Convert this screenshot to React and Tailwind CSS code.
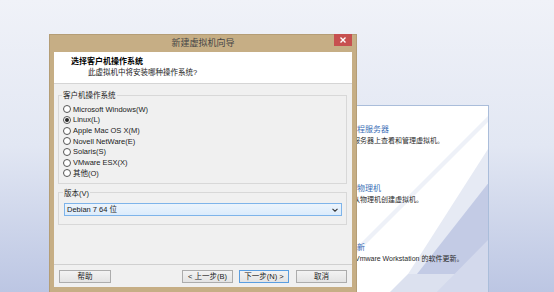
import React from 'react';

const font = { fontFamily: '"Liberation Sans", "Noto Sans CJK SC", sans-serif' };

const osList = [
  'Microsoft Windows(W)',
  'Linux(L)',
  'Apple Mac OS X(M)',
  'Novell NetWare(E)',
  'Solaris(S)',
  'VMware ESX(X)',
  '其他(O)',
];

const Radio = ({ checked }) => (
  <span className="w-[8px] h-[8px] rounded-full border border-[#555] bg-white flex items-center justify-center shrink-0">
    {checked && <span className="w-[4px] h-[4px] rounded-full bg-[#222]" />}
  </span>
);

const Btn = ({ children, primary, className = '' }) => (
  <div
    className={`h-[13px] flex items-center justify-center border bg-gradient-to-b from-[#f3f3f3] to-[#e3e3e3] text-[7.5px] text-[#1a1a1a] ${
      primary ? 'border-[#5b9ee0]' : 'border-[#acacac]'
    } ${className}`}
  >
    {children}
  </div>
);

const App = () => {
  return (
    <div
      className="relative w-[554px] h-[292px] overflow-hidden bg-gradient-to-b from-[#f0f2f8] via-[#e2e7f3] to-[#bcc6e3]"
      style={font}
    >
      {/* panel behind the wizard */}
      <div className="absolute left-[356px] top-[105px] w-[133px] h-[200px] bg-white border border-[#aabdda] overflow-hidden">
        <svg className="absolute inset-0" width="133" height="200">
          <polygon points="133,8 133,14 0,147 0,141" fill="#eef1f8" />
          <polygon points="133,40 133,168 51,168" fill="#e6eaf4" />
          <polygon points="133,75 133,168 60,168" fill="#c3cbe5" />
          <polygon points="51,168 133,168 133,200 19,200" fill="#dce1ef" />
          <polygon points="133,132 133,200 66,200" fill="#d3d9ec" />
        </svg>
        <div className="relative text-[7px] leading-[11px] text-[#2a2a2a]">
          <div className="pt-[18px] text-[8px] text-[#3d6fb6]">程服务器</div>
          <div className="-ml-[4px]">服务器上查看和管理虚拟机。</div>
          <div className="pt-[37px] text-[8px] text-[#3d6fb6]">物理机</div>
          <div className="-ml-[4px]">从物理机创建虚拟机。</div>
          <div className="pt-[37px] text-[8px] text-[#3d6fb6]">新</div>
          <div className="-ml-[2px]">Vmware Workstation 的软件更新。</div>
        </div>
      </div>

      {/* wizard window */}
      <div className="absolute left-[49px] top-[34px] w-[308px] h-[260px] bg-[#c6ae85] border border-[#b49d76] px-[4px] pb-[6px] flex flex-col">
        <div className="h-[17px] relative flex items-center justify-center">
          <span className="text-[9px] text-[#454545]">新建虚拟机向导</span>
          <div className="absolute right-[0px] -top-[1px] w-[18px] h-[12px] bg-[#c75050] flex items-center justify-center">
            <svg width="6" height="6" viewBox="0 0 6 6">
              <path d="M0.5 0.5 L5.5 5.5 M5.5 0.5 L0.5 5.5" stroke="#fff" strokeWidth="1.4" />
            </svg>
          </div>
        </div>

        <div className="flex-1 bg-[#f0f0f0] flex flex-col">
          <div className="h-[32px] bg-white border-b border-[#d5d5d5] pt-[4px]">
            <div className="pl-[17px] text-[8px] leading-[11px] font-bold text-black">选择客户机操作系统</div>
            <div className="pl-[34px] text-[7.5px] leading-[11px] text-[#222]">此虚拟机中将安装哪种操作系统?</div>
          </div>

          <div className="relative mt-[11px] ml-[4px] mr-[5px] h-[89px] border border-[#d8d8d8]">
            <span className="absolute left-[3px] -top-[6px] px-[1px] bg-[#f0f0f0] text-[7.5px] leading-[11px] text-[#1a1a1a]">
              客户机操作系统
            </span>
            <div className="pt-[8px] pl-[4px]">
              {osList.map((os, i) => (
                <div key={os} className="h-[10.7px] flex items-center gap-[2px] text-[7.5px] text-[#1a1a1a]">
                  <Radio checked={i === 1} />
                  <span>{os}</span>
                </div>
              ))}
            </div>
          </div>

          <div className="relative mt-[8px] ml-[4px] mr-[5px] h-[33px] border border-[#d8d8d8]">
            <span className="absolute left-[4px] -top-[5px] px-[1px] bg-[#f0f0f0] text-[7.5px] leading-[11px] text-[#1a1a1a]">
              版本(V)
            </span>
            <div className="mt-[10px] ml-[5px] mr-[4px] h-[13px] border border-[#7eb4ea] bg-gradient-to-b from-[#ecf4fc] to-[#dcecfc] flex items-center justify-between pl-[2px] pr-[3px]">
              <span className="text-[7.5px] text-[#1a1a1a]">Debian 7 64 位</span>
              <svg width="6" height="4" viewBox="0 0 6 4">
                <path d="M0.5 0.8 L3 3.2 L5.5 0.8" fill="none" stroke="#333" strokeWidth="1.1" />
              </svg>
            </div>
          </div>

          <div className="flex-1" />

          <div className="border-t border-[#d0d0d0] h-[23px] pt-[5px] flex px-[5px]">
            <Btn className="w-[52px]">帮助</Btn>
            <div className="flex-1" />
            <Btn className="w-[51px]">&lt; 上一步(B)</Btn>
            <Btn primary className="w-[50px] ml-[6px]">下一步(N) &gt;</Btn>
            <Btn className="w-[51px] ml-[7px]">取消</Btn>
          </div>
        </div>
      </div>
    </div>
  );
};

export default App;
